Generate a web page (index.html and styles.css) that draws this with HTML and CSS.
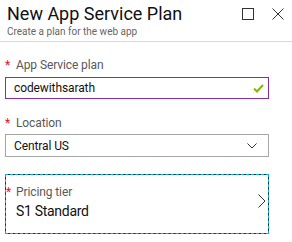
FILE: index.html
```html
<!DOCTYPE html>
<html>
<head>
<meta charset="utf-8">
<link rel="stylesheet" href="styles.css">
</head>
<body>
<div class="blade">
  <header class="head">
    <div class="titles">
      <h1 class="title">New App Service Plan</h1>
      <div class="subtitle">Create a plan for the web app</div>
    </div>
    <div class="actions">
      <svg class="ico" width="12" height="12" viewBox="0 0 12 12"><rect x="0.5" y="0.5" width="11" height="11" fill="none" stroke="#333" stroke-width="1"/></svg>
      <svg class="ico" width="12" height="12" viewBox="0 0 12 12"><path d="M0.5 0.5 L11.5 11.5 M11.5 0.5 L0.5 11.5" stroke="#333" stroke-width="1" fill="none"/></svg>
    </div>
  </header>
  <main class="form">
    <div class="field f1">
      <div class="label"><span class="req">*</span>App Service plan</div>
      <div class="box input">
        <span class="val">codewithsarath</span>
        <svg class="check" width="11" height="9" viewBox="0 0 11 9"><path d="M1 4.5 L4 7.5 L10 1" stroke="#7fba00" stroke-width="2" fill="none"/></svg>
      </div>
    </div>
    <div class="field f2">
      <div class="label lab2"><span class="req">*</span>Location</div>
      <div class="box select">
        <span class="val">Central US</span>
        <svg class="chev" width="10" height="6" viewBox="0 0 10 6"><path d="M0.5 0.5 L5 5 L9.5 0.5" stroke="#333" stroke-width="1" fill="none"/></svg>
      </div>
    </div>
    <div class="tier">
      <div class="tier-text">
        <div class="tier-label"><span class="req req-t">*</span>Pricing tier</div>
        <div class="tier-val">S1 Standard</div>
      </div>
      <svg class="chev-r" width="8" height="14" viewBox="0 0 8 14"><path d="M0.5 0.5 L7 7 L0.5 13.5" stroke="#333" stroke-width="1" fill="none"/></svg>
    </div>
  </main>
</div>
</body>
</html>
```
FILE: styles.css
```css
html, body {
  margin: 0;
  padding: 0;
  background: #fff;
}
body {
  font-family: Roboto, "Liberation Sans", sans-serif;
  color: #000;
  width: 292px;
  height: 242px;
  overflow: hidden;
}
.head {
  display: flex;
  justify-content: space-between;
  align-items: flex-start;
  padding: 4px 7px 0 7px;
  height: 37px;
  border-bottom: 1px solid #d9d9d9;
}
.title {
  margin: 0;
  font-weight: 400;
  font-size: 18px;
  line-height: 20px;
  color: #111;
}
.subtitle {
  margin-top: 3px;
  font-size: 10px;
  line-height: 10px;
  color: #666;
}
.actions {
  display: flex;
  gap: 18px;
  padding-top: 4px;
  padding-right: 1px;
}
.ico { display: block; }
.form {
  padding: 0 23px 0 5px;
}
.field.f1 { margin-top: 16px; }
.field.f2 { margin-top: 17px; }
.label {
  font-size: 12px;
  line-height: 14px;
  letter-spacing: -0.1px;
  color: #595959;
  display: flex;
  align-items: baseline;
  margin-bottom: 5px;
}
.lab2 { margin-bottom: 4px; }
.req {
  color: #e81123;
  width: 11px;
  font-size: 12px;
  letter-spacing: 0;
}
.box {
  height: 22px;
  box-sizing: border-box;
  display: flex;
  align-items: center;
  justify-content: space-between;
  padding: 0 4px 0 8px;
  font-size: 12px;
  color: #111;
}
.val { letter-spacing: -0.1px; }
.input {
  border: 1px solid #8a2da5;
}
.select {
  border: 1px solid #a6a6a6;
  height: 23px;
  padding-right: 11px;
}
.tier {
  margin-top: 17px;
  height: 60px;
  box-sizing: border-box;
  border: 1px dashed #00b4ef;
  background: linear-gradient(#fff, #fff) padding-box, #2a2a2a border-box;
  display: flex;
  align-items: flex-start;
  padding: 9px 2px 0 0;
}
.tier-text {
  flex: 1;
}
.tier-label {
  font-size: 12px;
  line-height: 16px;
  letter-spacing: -0.1px;
  color: #595959;
  display: flex;
  align-items: baseline;
}
.req-t { width: 10px; }
.tier-val {
  font-size: 14px;
  line-height: 22px;
  letter-spacing: -0.3px;
  padding-left: 10px;
  color: #111;
}
.chev-r {
  margin-top: 10px;
}
```
